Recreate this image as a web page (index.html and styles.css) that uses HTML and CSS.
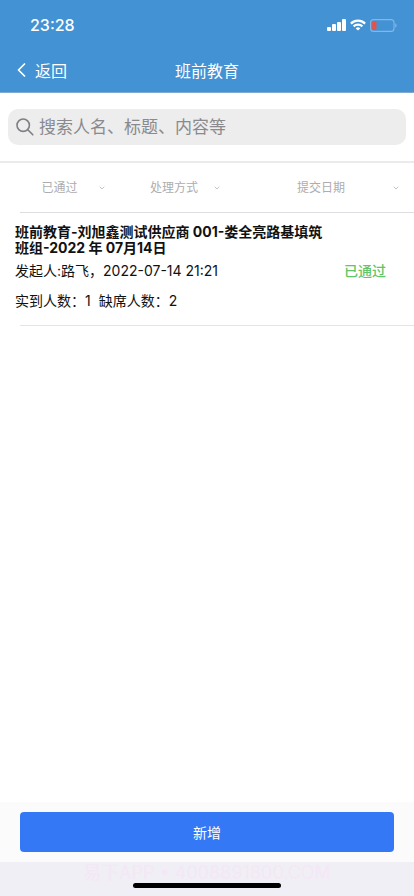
FILE: index.html
```html
<!DOCTYPE html>
<html lang="zh-CN">
<head>
<meta charset="utf-8">
<meta name="viewport" content="width=device-width, initial-scale=1">
<title>班前教育</title>
<link rel="stylesheet" href="styles.css">
</head>
<body>
<header class="header">
  <div class="status">
    <time class="clock">23:28</time>
    <div class="indicators">
      <svg width="19" height="12" viewBox="0 0 19 12" fill="#fff" aria-hidden="true"><rect x="0" y="8" width="4" height="4" rx="1"/><rect x="5" y="5" width="4" height="7" rx="1"/><rect x="10" y="3" width="4" height="9" rx="1"/><rect x="15" y="0" width="4" height="12" rx="1"/></svg>
      <svg width="16" height="12" viewBox="0 0 16 12" fill="none" stroke="#fff" stroke-width="2.2" aria-hidden="true"><path d="M.9 4.6a10.2 10.2 0 0 1 14.2 0M3.6 7.4a6.3 6.3 0 0 1 8.8 0"/><path d="M8 11.6 5.7 9.4a3.3 3.3 0 0 1 4.6 0z" fill="#fff" stroke="none"/></svg>
      <svg width="27" height="13" viewBox="0 0 27 13" aria-hidden="true"><rect x=".6" y=".6" width="23.4" height="11.8" rx="3" fill="none" stroke="#84b7e2" stroke-width="1.1"/><path d="M25.2 4.3v4.4q1.4-.6 1.4-2.2t-1.4-2.2z" fill="#84b7e2"/><rect x="2.2" y="2.2" width="4.2" height="8.6" rx="1" fill="#ee4f43"/></svg>
    </div>
  </div>
  <nav class="nav">
    <a class="back" href="#"><svg width="9" height="14" viewBox="0 0 9 14" fill="none" stroke="#fff" stroke-width="1.7" stroke-linecap="round" stroke-linejoin="round" aria-hidden="true"><path d="M7.5 1 1.5 7l6 6"/></svg>返回</a>
    <h1 class="title">班前教育</h1>
  </nav>
</header>
<main class="main">
  <form class="search">
    <label class="search-box">
      <svg width="18" height="18" viewBox="0 0 18 18" fill="none" stroke="#7f7f84" stroke-width="1.6" stroke-linecap="round" aria-hidden="true"><circle cx="7.2" cy="7.2" r="6.2"/><path d="m11.8 11.8 5 5"/></svg>
      <input class="search-input" type="search" placeholder="搜索人名、标题、内容等" aria-label="搜索">
    </label>
  </form>
  <div class="filters">
    <label class="filter"><select class="filter-select" aria-label="状态"><option>已通过</option></select><svg class="chevron" width="6" height="4" viewBox="0 0 6 4" aria-hidden="true"><path d="m.7.7 2.3 2.3L5.3.7"/></svg></label>
    <label class="filter"><select class="filter-select" aria-label="处理方式"><option>处理方式</option></select><svg class="chevron" width="6" height="4" viewBox="0 0 6 4" aria-hidden="true"><path d="m.7.7 2.3 2.3L5.3.7"/></svg></label>
    <label class="filter"><select class="filter-select" aria-label="提交日期"><option>提交日期</option></select><svg class="chevron" width="6" height="4" viewBox="0 0 6 4" aria-hidden="true"><path d="m.7.7 2.3 2.3L5.3.7"/></svg></label>
  </div>
  <article class="record">
    <div class="record-body">
      <h2 class="record-title">班前教育-刘旭鑫测试供应商 001-娄全亮路基填筑<br>班组-2022 年 07月14日</h2>
      <p class="record-line">发起人:路飞，2022-07-14 21:21</p>
      <p class="record-line record-counts"><span>实到人数：1</span><span>缺席人数：2</span></p>
    </div>
    <strong class="record-state">已通过</strong>
  </article>
</main>
<footer class="footer">
  <div class="actions"><button class="add" type="button">新增</button></div>
  <div class="home">
    <span class="mark">易下APP • 4008891800.COM</span>
    <div class="home-bar"></div>
  </div>
</footer>
</body>
</html>
```

FILE: styles.css
```css
* { box-sizing: border-box; }

body {
  margin: 0;
  min-height: 100vh;
  display: flex;
  flex-direction: column;
  background: #fff;
  color: #111;
  font-family: Inter, "Noto Sans CJK SC", sans-serif;
}

.header {
  padding-bottom: 2px;
  background: #4392d4;
  color: #fff;
  border-bottom: 1px solid #7fa9d0;
}

.status {
  height: 50px;
  padding: 0 17px 0 30px;
  display: flex;
  align-items: center;
  justify-content: space-between;
}

.clock {
  font-size: 16px;
  font-weight: 500;
}

.indicators {
  display: flex;
  align-items: center;
  gap: 4px;
}

.nav {
  height: 40px;
  padding: 0 17px;
  display: grid;
  grid-template-columns: 1fr auto 1fr;
  align-items: center;
}

.back {
  display: flex;
  align-items: center;
  gap: 9px;
  color: inherit;
  font-size: 16px;
  text-decoration: none;
}

.title {
  margin: 0;
  font-size: 16px;
  font-weight: 400;
}

.main { flex: 1; }

.search {
  padding: 16px 8px;
  border-bottom: 2px solid #ebebed;
}

.search-box {
  height: 36px;
  padding: 0 8px;
  display: flex;
  align-items: center;
  gap: 5px;
  border-radius: 10px;
  background: #ededed;
}

.search-input {
  flex: 1;
  min-width: 0;
  padding: 0;
  border: 0;
  outline: 0;
  background: none;
  color: #111;
  font: inherit;
  font-size: 17px;
}

.search-input::placeholder { color: #8a8a8e; }

.filters {
  height: 49px;
  padding-left: 6px;
  display: grid;
  grid-template-columns: 114fr 115fr 179fr;
}

.filter {
  display: flex;
  align-items: center;
  position: relative;
}

.filter-select {
  width: 100%;
  height: 100%;
  padding: 0 7px 0 0;
  border: 0;
  appearance: none;
  background: none;
  color: #adadad;
  font: inherit;
  font-size: 12px;
  text-align: center;
  text-align-last: center;
}

.chevron {
  position: absolute;
  right: 15px;
  fill: none;
  stroke: #c4c4c4;
  stroke-width: 1;
  pointer-events: none;
}

.record {
  padding: 12px 28px 10px 15px;
  display: flex;
  align-items: center;
  justify-content: space-between;
  background:
    linear-gradient(#dedee2, #dedee2) 20px 0 / 100% 1px no-repeat,
    linear-gradient(#e4e4e6, #e4e4e6) 20px 100% / 100% 1px no-repeat;
}

.record-title {
  margin: 0;
  font-size: 14px;
  font-weight: 700;
  line-height: 16px;
  white-space: nowrap;
}

.record-line {
  margin: 0;
  font-size: 14px;
  line-height: 30px;
}

.record-counts {
  display: flex;
  gap: 8px;
}

.record-state {
  color: #62c466;
  font-size: 14px;
  font-weight: 500;
}

.actions {
  padding: 10px 20px;
  background: #fbfbfb;
}

.add {
  display: block;
  width: 100%;
  height: 40px;
  border: 0;
  border-radius: 4px;
  background: #3478f6;
  color: #fff;
  font: inherit;
  font-size: 14px;
}

.home {
  height: 34px;
  padding-bottom: 8px;
  display: flex;
  flex-direction: column;
  align-items: center;
  justify-content: flex-end;
  background: #f0eff5;
}

.mark {
  color: #f5e7f6;
  font-size: 18px;
  line-height: 21px;
}

.home-bar {
  width: 148px;
  height: 5px;
  border-radius: 3px;
  background: #000;
}
```
